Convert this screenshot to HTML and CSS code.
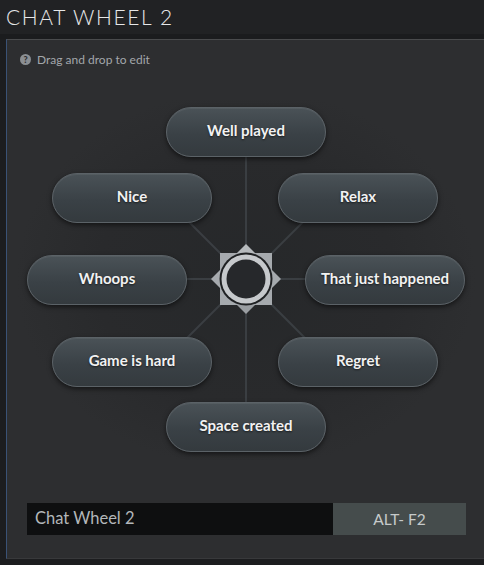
FILE: index.html
```html
<!DOCTYPE html>
<html>
<head>
<meta charset="utf-8">
<link rel="stylesheet" href="styles.css">
</head>
<body>
<header class="header"><h1 class="title">CHAT WHEEL 2</h1></header>
<section class="panel">
  <div class="help"><span class="help-icon">?</span><span class="help-text">Drag and drop to edit</span></div>
  <div class="wheel">
    <svg class="spokes" width="477" height="360" viewBox="0 0 477 360">
      <g stroke="#3a3e42" stroke-width="2">
        <line x1="239" y1="50" x2="239" y2="310"/>
        <line x1="180" y1="179" x2="300" y2="179"/>
        <line x1="239" y1="179" x2="170" y2="110"/>
        <line x1="239" y1="179" x2="308" y2="110"/>
        <line x1="239" y1="179" x2="170" y2="248"/>
        <line x1="239" y1="179" x2="308" y2="248"/>
      </g>
      <g transform="translate(239 179)">
        <rect x="-26" y="-26" width="52" height="52" fill="#a6aaae"/>
        <polygon points="-9,-26 9,-26 0,-35" fill="#b6babd"/>
        <polygon points="-9,26 9,26 0,35" fill="#9a9ea2"/>
        <polygon points="-26,-9 -26,9 -35,0" fill="#a6aaae"/>
        <polygon points="26,-9 26,9 35,0" fill="#a6aaae"/>
        <circle r="26.5" fill="#1f2123"/>
        <circle r="24.5" fill="#c6c9cc"/>
        <circle r="19.5" fill="#26282b"/>
      </g>
    </svg>
    <button class="pill p-top">Well played</button>
    <button class="pill p-nice">Nice</button>
    <button class="pill p-relax">Relax</button>
    <button class="pill p-whoops">Whoops</button>
    <button class="pill p-that">That just happened</button>
    <button class="pill p-game">Game is hard</button>
    <button class="pill p-regret">Regret</button>
    <button class="pill p-space">Space created</button>
  </div>
  <div class="bind">
    <div class="bind-name">Chat Wheel 2</div>
    <div class="bind-key">ALT- F2</div>
  </div>
</section>
</body>
</html>
```
FILE: styles.css
```css
html, body {
  margin: 0;
  padding: 0;
}
body {
  width: 484px;
  height: 565px;
  overflow: hidden;
  background: #1c1d1f;
  font-family: "Lato", "Open Sans", sans-serif;
}
.header {
  height: 34px;
  background: #212224;
  border-bottom: 5px solid #1b1c1e;
  padding-left: 6px;
}
.title {
  margin: 0;
  padding-top: 4px;
  font-family: "Lato", sans-serif;
  font-weight: 300;
  font-size: 21px;
  letter-spacing: 1.6px;
  color: #e6e7e8;
  line-height: 26px;
}
.panel {
  margin-left: 6px;
  height: 518px;
  background: #2d2e30;
  border-top: 1px solid #4a4b4d;
  border-left: 1px solid #3a5276;
  border-bottom: 1px solid #38393b;
  box-sizing: content-box;
  display: flex;
  flex-direction: column;
}
.help {
  height: 32px;
  display: flex;
  align-items: center;
  gap: 6px;
  padding-left: 13px;
  padding-top: 6px;
  box-sizing: border-box;
}
.help-icon {
  width: 11px;
  height: 11px;
  border-radius: 50%;
  background: #8b8f93;
  color: #2d2e30;
  font-size: 9px;
  font-weight: 900;
  line-height: 11px;
  text-align: center;
}
.help-text {
  font-size: 12px;
  color: #a3a7ab;
}
.wheel {
  position: relative;
  margin-top: 28px;
  height: 360px;
  background: radial-gradient(ellipse 230px 190px at 239px 179px, #26282a 0%, #292a2c 65%, rgba(45,46,48,0) 100%);
}
.spokes {
  position: absolute;
  left: 0;
  top: 0;
}
.pill {
  position: absolute;
  width: 160px;
  height: 50px;
  box-sizing: border-box;
  border-radius: 25px;
  border: 1px solid #5b6267;
  background: linear-gradient(#4a5257, #3a4146 55%, #343a3e);
  box-shadow: 0 2px 5px rgba(0,0,0,0.55), inset 0 1px 0 rgba(255,255,255,0.06);
  color: #f2f2f2;
  font-family: "Lato", sans-serif;
  font-weight: 700;
  font-size: 15px;
  padding: 0 0 4px 0;
  text-shadow: 0 1px 2px rgba(0,0,0,0.6);
}
.p-top { left: 159px; top: 7px; }
.p-nice { left: 45px; top: 73px; }
.p-relax { left: 271px; top: 73px; }
.p-whoops { left: 20px; top: 155px; }
.p-that { left: 298px; top: 155px; }
.p-game { left: 45px; top: 237px; }
.p-regret { left: 271px; top: 237px; }
.p-space { left: 159px; top: 302px; }
.bind {
  display: flex;
  margin-top: 43px;
  margin-left: 20px;
  height: 32px;
}
.bind-name {
  width: 306px;
  background: #0e0f10;
  color: #b3b7ba;
  font-size: 16.5px;
  line-height: 31px;
  padding-left: 8px;
  box-sizing: border-box;
}
.bind-key {
  width: 133px;
  background: #454c4c;
  color: #c6caca;
  font-size: 15.5px;
  line-height: 32px;
  text-align: center;
}
```
